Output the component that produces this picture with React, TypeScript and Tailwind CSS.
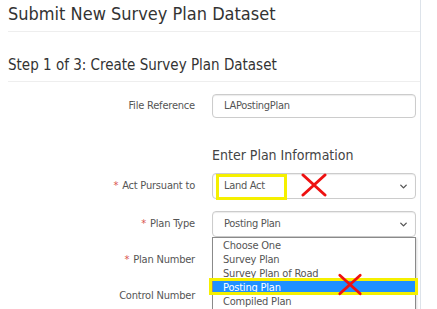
import { ChevronDown } from "lucide-react";

const font = { fontFamily: '"DejaVu Sans Condensed", "DejaVu Sans", sans-serif' };

function RedX({ className }: { className: string }) {
  return (
    <svg className={`absolute ${className}`} viewBox="0 0 28 24" fill="none">
      <path d="M3 2 L25 22 M25 2 L3 22" stroke="#ee1111" strokeWidth="3" strokeLinecap="round" />
    </svg>
  );
}

function Row({ label, required, children, className }: { label: string; required?: boolean; children?: React.ReactNode; className: string }) {
  return (
    <div className={`flex items-center ${className}`}>
      <div className="w-[187px] text-right text-[11px] tracking-[-0.2px] text-[#555]">
        {required && <span className="text-[#d9534f] mr-1">*</span>}
        {label}
      </div>
      <div className="ml-[17px] w-[204px]">{children}</div>
    </div>
  );
}

function Select({ value }: { value: string }) {
  return (
    <div className="h-[26px] border border-[#ccc] rounded-[4px] flex items-center justify-between pl-[11px] pr-[6px] text-[11px] tracking-[-0.3px] text-[#555] bg-white shadow-[inset_0_1px_1px_rgba(0,0,0,0.08)]">
      <span>{value}</span>
      <ChevronDown size={11} strokeWidth={3} className="text-[#555]" />
    </div>
  );
}

export default function App() {
  const options = ["Choose One", "Survey Plan", "Survey Plan of Road", "Posting Plan", "Compiled Plan"];
  return (
    <div className="w-[437px] h-[309px] overflow-hidden bg-white" style={font}>
      <div className="w-[421px] h-[309px] border-r border-[#dde3ea] relative">
        <div className="h-[32px] ml-2 border-b border-[#eee] flex items-center">
          <h1 className="text-[18px] text-[#333] leading-none -mt-[4px]">Submit New Survey Plan Dataset</h1>
        </div>
        <div className="h-[50px] ml-2 border-b border-[#eee] flex items-end pb-[8px]">
          <h2 className="text-[15px] text-[#333] leading-none">Step 1 of 3: Create Survey Plan Dataset</h2>
        </div>

        <Row label="File Reference" className="mt-[12px] pl-2">
          <div className="h-[24px] border border-[#ccc] rounded-[4px] flex items-center pl-[11px] text-[11px] tracking-[-0.3px] text-[#555] shadow-[inset_0_1px_1px_rgba(0,0,0,0.08)]">
            LAPostingPlan
          </div>
        </Row>

        <div className="ml-[212px] mt-[30px] text-[14px] text-[#444] leading-none">Enter Plan Information</div>

        <Row label="Act Pursuant to" required className="mt-[11px] pl-2">
          <Select value="Land Act" />
        </Row>
        <Row label="Plan Type" required className="mt-[12px] pl-2">
          <Select value="Posting Plan" />
        </Row>
        <Row label="Plan Number" required className="mt-[11px] pl-2 h-[24px]" />
        <Row label="Control Number" className="mt-[12px] pl-2 h-[24px]" />

        {/* open dropdown list */}
        <div className="absolute left-[212px] top-[237px] w-[204px] border border-[#8a8a8a] bg-white text-[11px] tracking-[-0.2px] text-[#555] leading-[14px] pt-[1px] shadow-[1px_1px_2px_rgba(0,0,0,0.15)]">
          {options.map((o) => (
            <div key={o} className={`pl-[10px] ${o === "Posting Plan" ? "bg-[#1e90ff] text-white" : ""}`}>
              {o}
            </div>
          ))}
        </div>

        {/* annotations */}
        <div className="absolute left-[216px] top-[174px] w-[71px] h-[26px] border-[3px] border-[#f5f000]" />
        <RedX className="left-[300px] top-[173px] w-[28px] h-[24px]" />
        <div className="absolute left-[209px] top-[278px] w-[209px] h-[17px] border-[3px] border-[#f5f000]" />
        <RedX className="left-[337px] top-[272px] w-[26px] h-[25px]" />
      </div>
    </div>
  );
}
